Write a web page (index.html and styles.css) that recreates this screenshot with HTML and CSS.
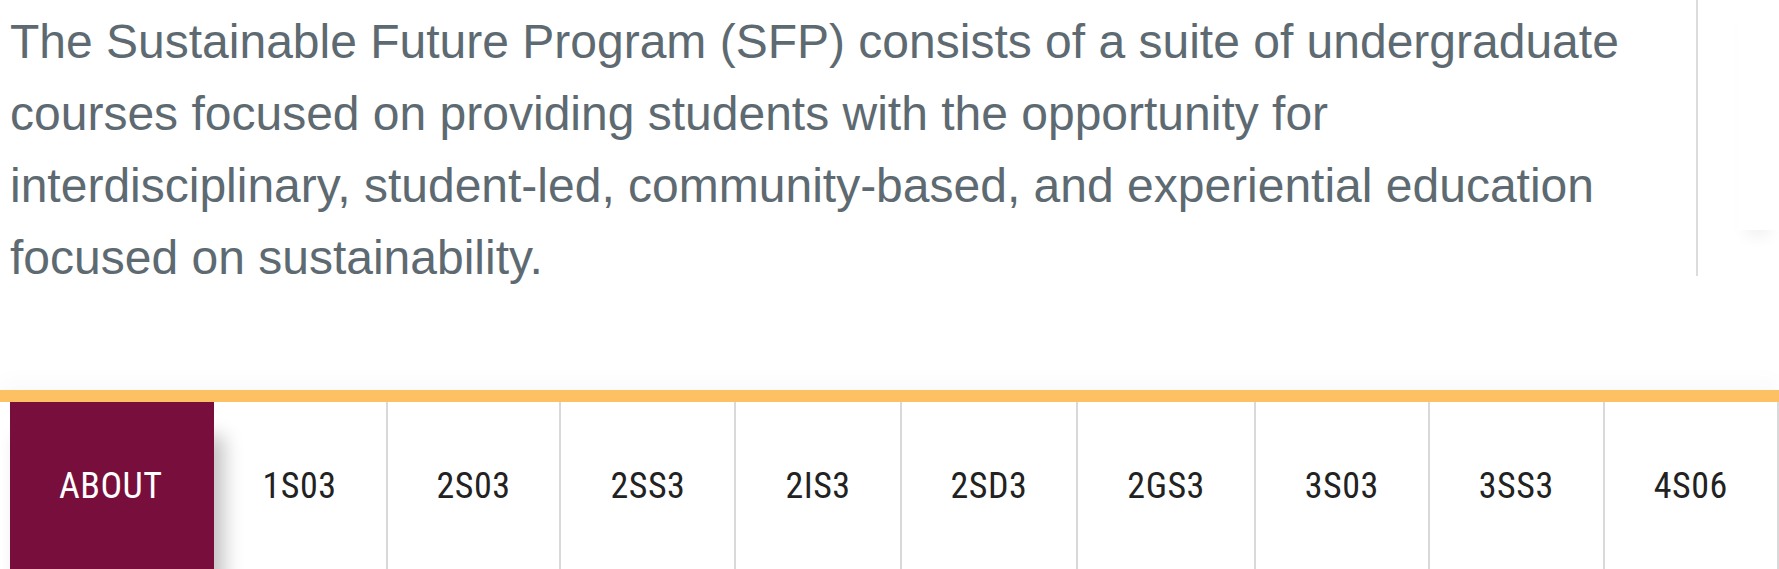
FILE: index.html
```html
<!DOCTYPE html>
<html lang="en">
<head>
<meta charset="utf-8">
<title>Sustainable Future Program</title>
<link rel="stylesheet" href="styles.css">
</head>
<body>
  <div class="top">
    <div class="intro">
      <p class="lead">The Sustainable Future Program (SFP) consists of a suite of undergraduate courses focused on providing students with the opportunity for interdisciplinary, student-led, community-based, and experiential education focused on sustainability.</p>
    </div>
    <aside class="side"></aside>
  </div>
  <nav class="tabs">
    <ul class="tab-list">
      <li class="tab active">ABOUT</li>
      <li class="tab">1S03</li>
      <li class="tab">2S03</li>
      <li class="tab">2SS3</li>
      <li class="tab">2IS3</li>
      <li class="tab">2SD3</li>
      <li class="tab">2GS3</li>
      <li class="tab">3S03</li>
      <li class="tab">3SS3</li>
      <li class="tab">4S06</li>
    </ul>
  </nav>
</body>
</html>
```

FILE: styles.css
```css
html, body {
  margin: 0;
  padding: 0;
  background: #ffffff;
  overflow: hidden;
}

.top {
  display: flex;
  align-items: flex-start;
  padding-left: 10px;
  height: 370px;
}

.intro {
  width: 1660px;
  padding-right: 26px;
  height: 276px;
  border-right: 2px solid #dcdcdc;
  box-sizing: content-box;
}

.lead {
  margin: 0;
  padding-top: 6px;
  font-family: "Liberation Sans", Arial, sans-serif;
  font-size: 48px;
  line-height: 72px;
  color: #5e6a71;
}

.side {
  flex: 1;
  margin-left: 40px;
  height: 230px;
  background: #ffffff;
  box-shadow: 0 14px 16px -8px rgba(0, 0, 0, 0.06);
}

.tabs {
  margin-top: 20px;
  border-top: 12px solid #fdc062;
  box-shadow: 0 -10px 20px rgba(0, 0, 0, 0.025);
  background: #ffffff;
}

.tab-list {
  display: flex;
  margin: 0;
  padding: 0 0 0 10px;
  list-style: none;
}

.tab {
  flex: 0 1 auto;
  height: 167px;
  display: flex;
  align-items: center;
  justify-content: center;
  padding: 0 49px;
  border-right: 2px solid #d9d9d9;
  font-family: "Roboto Condensed", "Roboto", sans-serif;
  font-stretch: condensed;
  font-size: 36px;
  letter-spacing: 0.5px;
  color: #222222;
  white-space: nowrap;
}

.tab.active {
  position: relative;
  z-index: 1;
  background: #770e3b;
  border-right-color: #770e3b;
  color: #ffffff;
  box-shadow: 10px 34px 18px rgba(0, 0, 0, 0.24);
}
```
